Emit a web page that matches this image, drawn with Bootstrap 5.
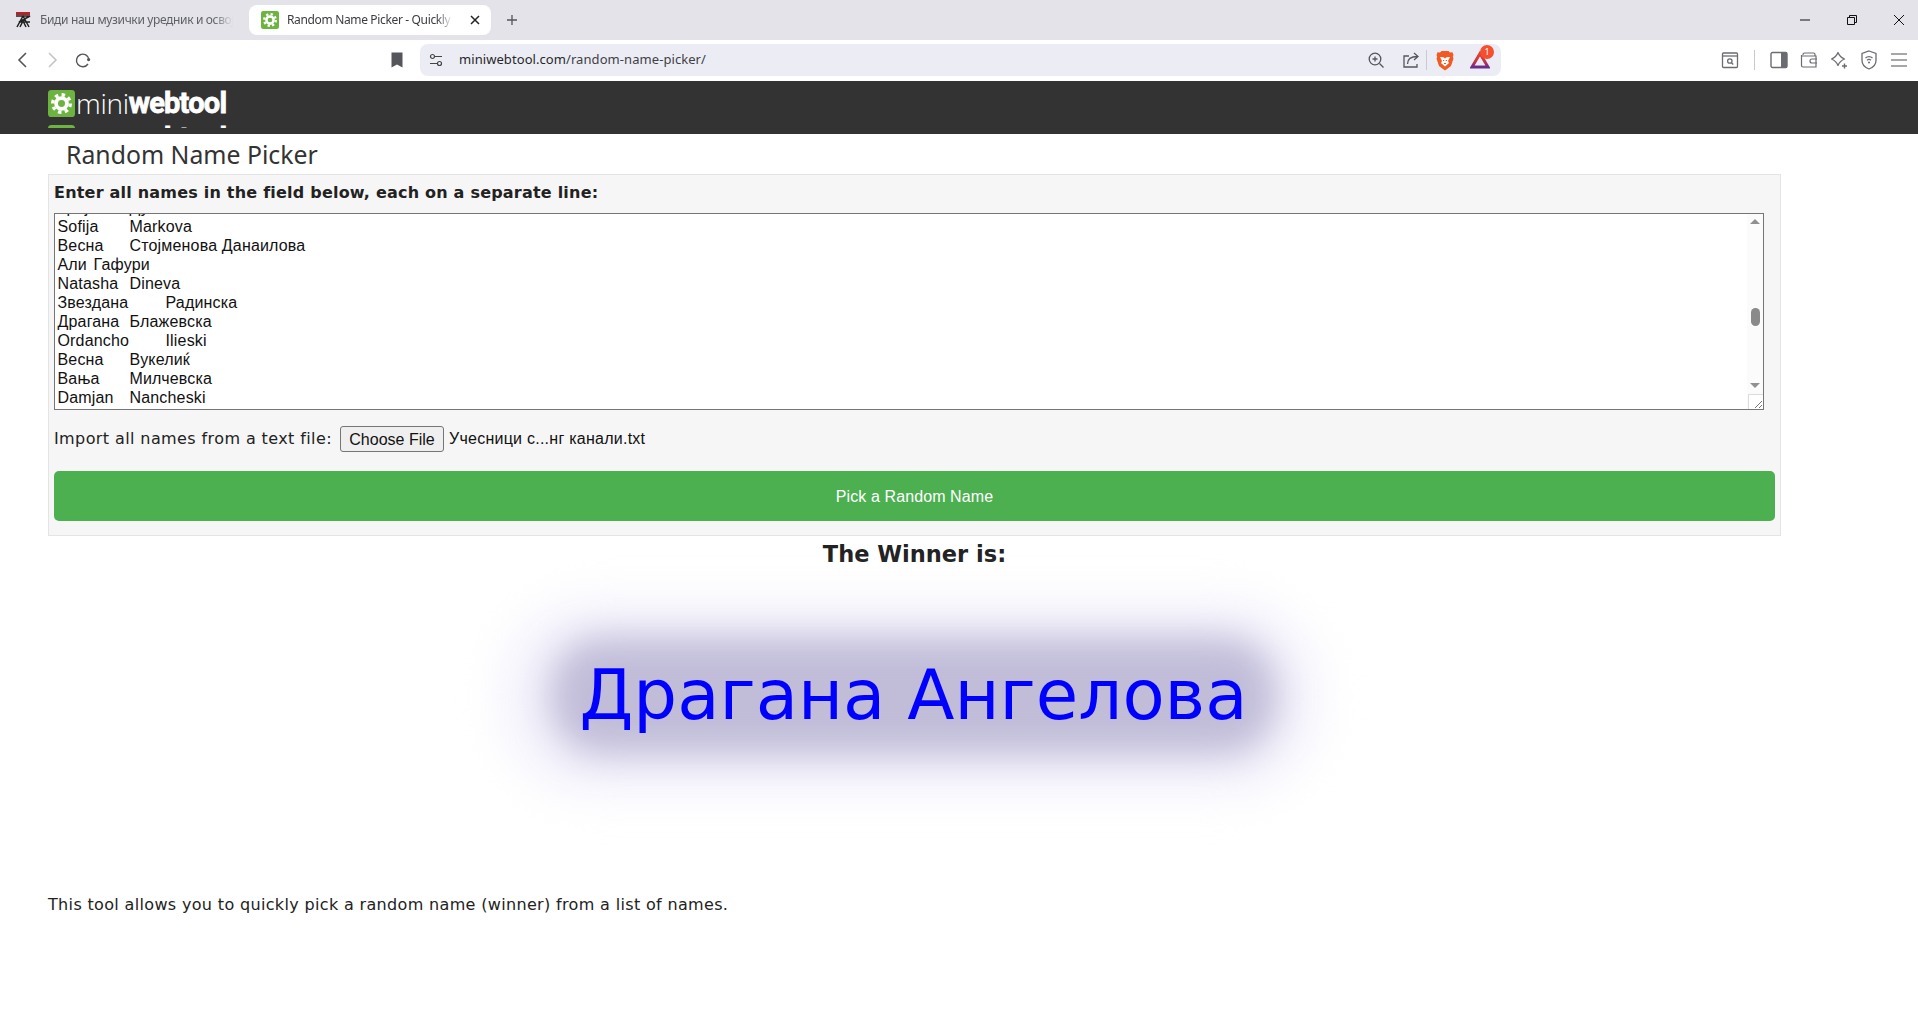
<!DOCTYPE html>
<html lang="en">
<head>
<meta charset="utf-8">
<title>Random Name Picker</title>
<link href="https://cdn.jsdelivr.net/npm/bootstrap@5.3.0/dist/css/bootstrap.min.css" rel="stylesheet">
<style>
html,body{height:100%;background:#fff;overflow:hidden}
body{font-family:"DejaVu Sans",sans-serif;font-size:16px;color:#222}
.tabstrip{height:40px;background:#e3e3e9;font-family:"Noto Sans",sans-serif;font-size:12px;letter-spacing:-.35px}
.tab-idle{width:249px;height:30px;padding-left:14px;color:#5f6068}
.tab-on{width:242px;height:30px;background:#fff;border-radius:8px;padding:0 10px 0 12px;color:#3b3b41}
.tab-text{white-space:nowrap;overflow:hidden;-webkit-mask-image:linear-gradient(90deg,#000 90%,transparent);mask-image:linear-gradient(90deg,#000 90%,transparent)}
.tab-idle-text{width:193px}
.plusmark{margin-left:14px}
.wincontrols{width:141px;margin-right:-4px}
.winbtn{width:47px;height:40px}
.toolbar{height:41px;background:#fff;padding-bottom:1px}
.ic{width:30px;height:30px;flex:none}
.ic-fwd{margin-left:-1px}
.ic-rel{margin-left:1px}
.bmark{margin-left:284px}
.pill{width:1081px;height:32px;margin-left:8px;background:#ecedf4;border-radius:8px;font-family:"Noto Sans",sans-serif;font-size:13px;letter-spacing:.07px;color:#3f4046;padding:0 6px 0 1px}
.urlhost{color:#26272b}
.sepa{width:1px;height:20px;background:#c9cad0;flex:none}
.sepa-wide{margin:0 9px}
.ic-share{margin-left:5px}
.ic-brave{margin-left:3px}
.ic-tri{margin-left:5px}
.tri-count{right:1px;top:0;width:14px;height:14px;background:#f4502f;color:#fff;font-size:9px;line-height:14px;text-align:center}
.sitehead{height:53px;background:#333}
.logowrap{height:47px;width:300px;margin-left:48px;padding-top:9px;overflow:hidden}
.logorow{height:35px;color:#fff;white-space:nowrap;line-height:26px}
.logo-mini{font-family:"Open Sans",sans-serif;font-weight:300;font-size:28px;letter-spacing:-.3px;margin-left:1px}
.logo-web{font-family:"Liberation Sans Narrow","Roboto",sans-serif;font-weight:700;font-size:29px;letter-spacing:-.8px;-webkit-text-stroke:.8px #fff}
.pagearea{padding-left:48px}
.pgtitle{font-family:"Noto Sans",sans-serif;font-size:24.800px;font-weight:400;line-height:40px;margin:0 0 0 18px;color:#333}
.panelbox{width:1733px;height:362px;background:#f6f6f6;border:1px solid #e4e4e4;padding:0 5px}
.lead-label{font-weight:700;font-size:16px;letter-spacing:.21px;line-height:20px;margin:8px 0 0 0;color:#222}
.areawrap{width:1710px;height:197px;margin-top:10px}
.namesbox{display:block;width:100%;height:100%;border:1px solid #767676;padding:3px 2px 2px 2.500px;resize:none;overflow:hidden;font-family:"Liberation Sans",sans-serif;font-size:16px;letter-spacing:.17px;tab-size:7.800;line-height:19px;color:#111;background:#fff;white-space:pre;outline:0}
.fakebar{position:absolute;right:1px;top:1px;bottom:1px;width:16px;background:#fbfbfb}
.bar-up,.bar-down{position:absolute;left:3px;width:0;height:0;border-left:5px solid transparent;border-right:5px solid transparent}
.bar-up{top:5px;border-bottom:5px solid #909090}
.bar-down{bottom:21px;border-top:5px solid #909090}
.bar-thumb{position:absolute;left:4px;top:94px;width:9px;height:18px;border-radius:5px;background:#8a8a8a}
.bar-grip{position:absolute;right:0;bottom:0;width:15px;height:15px;background:#fff;border-left:1px solid #dcdcdc;border-top:1px solid #dcdcdc;line-height:0}
.importrow{margin-top:16px;height:26px;line-height:26px;letter-spacing:.4px}
.filebtn{font-family:"Liberation Sans",sans-serif;font-size:16px;letter-spacing:0;height:26px;width:104px;margin-left:8px;padding:0;border:1px solid #767676;border-radius:3px;background:#efefef;color:#111}
.filename{font-family:"Liberation Sans",sans-serif;font-size:16px;letter-spacing:.25px;margin-left:5px;color:#111}
.pickbtn{display:block;width:1721px;height:50px;margin-top:19px;padding:2px 0 0;background:#4caf50;border:0;border-radius:5px;color:#fff;font-family:"Liberation Sans",sans-serif;font-size:16px;letter-spacing:.1px}
.winhead{width:1733px;font-weight:700;font-size:22.500px;line-height:30px;margin-top:3px;color:#222;text-align:center}
.winname{position:relative;z-index:0;width:1731px;height:304px;color:#00f;font-size:69px;line-height:252px;text-align:center}
.winname::before{content:"";position:absolute;z-index:-1;left:501px;top:67px;width:729px;height:120px;border-radius:55px;background:#c1bdd9;filter:blur(17px)}
.winname::after{content:"";position:absolute;z-index:-2;left:452px;top:30px;width:820px;height:196px;border-radius:90px;background:#f4f3fc;filter:blur(20px)}
.bottomnote{margin:20px 0 0;line-height:24px;letter-spacing:.34px;color:#222}
</style>
</head>
<body>
<svg width="0" height="0" class="d-block position-absolute"><defs>
<symbol id="gearfav" viewBox="0 0 24 24"><rect width="24" height="24" rx="3" fill="#6db33f"/><circle cx="12" cy="12" r="7.800" fill="none" stroke="#fff" stroke-width="3" stroke-dasharray="3.100 3"/><circle cx="12" cy="12" r="4.800" fill="none" stroke="#fff" stroke-width="3.400"/></symbol>
</defs></svg>

<div class="tabstrip d-flex align-items-center">
  <div class="tab-idle d-flex align-items-center">
    <svg width="18" height="18" viewBox="0 0 18 18" class="flex-shrink-0 me-2"><rect x="2" y="1" width="14" height="3" fill="#b3242a"/><path d="M2 5h14L5 11h11M3 16l6-11 6 11M6 16l3-6 3 6" fill="none" stroke="#222" stroke-width="1.500"/></svg>
    <span class="tab-text tab-idle-text">Биди наш музички уредник и освој</span>
  </div>
  <div class="tab-on d-flex align-items-center">
    <svg width="18" height="18" class="flex-shrink-0 me-2"><use href="#gearfav"/></svg>
    <span class="tab-text flex-grow-1">Random Name Picker - Quickly Pick a Random</span>
    <svg width="12" height="12" viewBox="0 0 12 12" class="flex-shrink-0 ms-3"><path d="M2 2l8 8M10 2l-8 8" stroke="#222" stroke-width="1.500"/></svg>
  </div>
  <svg width="14" height="14" viewBox="0 0 14 14" class="plusmark flex-shrink-0"><path d="M7 2v10M2 7h10" stroke="#55565c" stroke-width="1.300"/></svg>
  <div class="wincontrols ms-auto d-flex">
    <div class="winbtn d-flex align-items-center justify-content-center"><svg width="12" height="12" viewBox="0 0 12 12"><path d="M1 6h10" stroke="#111" stroke-width="1"/></svg></div>
    <div class="winbtn d-flex align-items-center justify-content-center"><svg width="12" height="12" viewBox="0 0 12 12"><path d="M1.500 3.500h7v7h-7zM3.500 3.500v-2h7v7h-2" fill="none" stroke="#111" stroke-width="1"/></svg></div>
    <div class="winbtn d-flex align-items-center justify-content-center"><svg width="12" height="12" viewBox="0 0 12 12"><path d="M1 1l10 10M11 1L1 11" stroke="#111" stroke-width="1"/></svg></div>
  </div>
</div>

<div class="toolbar d-flex align-items-center">
  <div class="ic ms-2 d-flex align-items-center justify-content-center"><svg width="16" height="18" viewBox="0 0 16 18"><path d="M11 2L4 9l7 7" fill="none" stroke="#55565c" stroke-width="1.600"/></svg></div>
  <div class="ic ic-fwd d-flex align-items-center justify-content-center"><svg width="16" height="18" viewBox="0 0 16 18"><path d="M5 2l7 7-7 7" fill="none" stroke="#c4c5ca" stroke-width="1.600"/></svg></div>
  <div class="ic ic-rel d-flex align-items-center justify-content-center"><svg width="18" height="18" viewBox="0 0 18 18"><path d="M15 8.500A6.300 6.300 0 1 0 14 13" fill="none" stroke="#55565c" stroke-width="1.400"/><circle cx="14.600" cy="8.600" r="1.600" fill="#55565c"/></svg></div>
  <div class="ic bmark d-flex align-items-center justify-content-center"><svg width="14" height="18" viewBox="0 0 14 18"><path d="M1.500 1.500h11v15L7 13.500l-5.500 3z" fill="#55565c"/></svg></div>
  <div class="pill d-flex align-items-center">
    <div class="ic d-flex align-items-center justify-content-center"><svg width="16" height="16" viewBox="0 0 16 16"><circle cx="4.500" cy="4.500" r="2" fill="none" stroke="#444" stroke-width="1.200"/><path d="M7 4.500h7M2 11.500h7" stroke="#444" stroke-width="1.200"/><circle cx="11.500" cy="11.500" r="2" fill="none" stroke="#444" stroke-width="1.200"/></svg></div>
    <span class="ms-2"><span class="urlhost">miniwebtool.com</span>/random-name-picker/</span>
    <div class="ic ms-auto d-flex align-items-center justify-content-center"><svg width="18" height="18" viewBox="0 0 18 18"><circle cx="8" cy="8" r="5.800" fill="none" stroke="#55565c" stroke-width="1.300"/><path d="M12.500 12.500l4 4M8 5.500v5M5.500 8h5" stroke="#55565c" stroke-width="1.300"/></svg></div>
    <div class="ic ic-share d-flex align-items-center justify-content-center"><svg width="18" height="18" viewBox="0 0 18 18"><path d="M7 5H2v11h13v-3" fill="none" stroke="#55565c" stroke-width="1.300"/><path d="M5.500 13c0-5 3-7.500 10-7.500M12 2l4 3.500L12 9" fill="none" stroke="#55565c" stroke-width="1.300"/></svg></div>
    <div class="sepa"></div>
    <div class="ic ic-brave d-flex align-items-center justify-content-center"><svg width="18" height="21" viewBox="0 0 18 21"><path d="M5.500 1h7L14 2.500l2.500-.3L17.500 5l-.7 2 .7 1.500-2.500 7.500L9 20.500 3 16 .5 8.500 1.200 7 .5 5l1-2.800 2.500.3z" fill="#f15a22"/><path d="M4 7l3.500.2L9 8.500l1.500-1.300L14 7l-2 4 1 2-4 3.500L5 13l1-2z" fill="#fff"/><path d="M7 10.500h1.200M9.800 10.500H11M8 13.500h2" stroke="#f15a22" stroke-width="1"/></svg></div>
    <div class="ic ic-tri position-relative d-flex align-items-center justify-content-center"><svg width="20" height="18" viewBox="0 0 20 18"><defs><linearGradient id="trigrad" x1="0" y1="0" x2="0" y2="1"><stop offset="0" stop-color="#e8402a"/><stop offset=".65" stop-color="#c0334e"/><stop offset="1" stop-color="#662d91"/></linearGradient></defs><path d="M10 2.500l8 13.500H2z" fill="none" stroke="url(#trigrad)" stroke-width="3"/></svg><span class="tri-count position-absolute rounded-circle d-block">1</span></div>
  </div>
  <div class="ms-auto d-flex align-items-center me-1">
    <div class="ic d-flex align-items-center justify-content-center"><svg width="18" height="18" viewBox="0 0 18 18"><rect x="1.500" y="2" width="15" height="14.500" rx="1" fill="none" stroke="#6b6c72" stroke-width="1.300"/><path d="M1.500 5h15" stroke="#6b6c72" stroke-width="1.300"/><circle cx="8.800" cy="10" r="2.200" fill="none" stroke="#6b6c72" stroke-width="1.300"/><path d="M10.500 11.800l1.700 1.700" stroke="#6b6c72" stroke-width="1.300"/></svg></div>
    <div class="sepa sepa-wide"></div>
    <div class="ic d-flex align-items-center justify-content-center"><svg width="18" height="18" viewBox="0 0 18 18"><rect x="1" y="1.500" width="16" height="15" rx="1.500" fill="none" stroke="#6b6c72" stroke-width="1.400"/><rect x="11" y="1.500" width="6" height="15" fill="#6b6c72"/></svg></div>
    <div class="ic d-flex align-items-center justify-content-center"><svg width="18" height="18" viewBox="0 0 18 18"><path d="M3 4V3.500A1.500 1.500 0 0 1 4.500 2h9A1.500 1.500 0 0 1 15 3.500V5M1.500 5H16v11H3a1.500 1.500 0 0 1-1.500-1.500V4" fill="none" stroke="#6b6c72" stroke-width="1.200"/><path d="M17 8h-5a2 2 0 0 0 0 4h5" fill="none" stroke="#6b6c72" stroke-width="1.200"/></svg></div>
    <div class="ic d-flex align-items-center justify-content-center"><svg width="18" height="18" viewBox="0 0 18 18"><path d="M8 1.500c1 2.500 2.800 5 6.500 6.500-3.700 1.500-5.500 4-6.500 6.500C7 12 5.200 9.500 1.500 8 5.200 6.500 7 4 8 1.500z" fill="none" stroke="#6b6c72" stroke-width="1.300" stroke-linejoin="round"/><path d="M14.500 12.500v5M12 15h5" stroke="#6b6c72" stroke-width="1.400"/></svg></div>
    <div class="ic d-flex align-items-center justify-content-center"><svg width="18" height="20" viewBox="0 0 18 20"><path d="M9 1l7 2.500v7c0 4-3 7-7 8.500-4-1.500-7-4.500-7-8.500v-7z" fill="none" stroke="#6b6c72" stroke-width="1.300"/><path d="M5.500 8a5 5 0 0 1 7 0M7 10.200a3 3 0 0 1 4 0" fill="none" stroke="#6b6c72" stroke-width="1.200"/><circle cx="9" cy="12.500" r="1" fill="#6b6c72"/></svg></div>
    <div class="ic d-flex align-items-center justify-content-center"><svg width="18" height="16" viewBox="0 0 18 16"><path d="M1 2h16M1 8h16M1 14h16" stroke="#8a8b90" stroke-width="1.600"/></svg></div>
  </div>
</div>

<div class="sitehead">
  <div class="logowrap">
    <div class="logorow d-flex align-items-start"><svg width="27" height="27" class="flex-shrink-0"><use href="#gearfav"/></svg><span class="logo-mini">mini</span><span class="logo-web">webtool</span></div>
    <div class="logorow d-flex align-items-start"><svg width="27" height="27" class="flex-shrink-0"><use href="#gearfav"/></svg><span class="logo-mini">mini</span><span class="logo-web">webtool</span></div>
  </div>
</div>

<main class="pagearea">
  <h1 class="pgtitle">Random Name Picker</h1>
  <form class="panelbox" onsubmit="return false">
    <p class="lead-label">Enter all names in the field below, each on a separate line:</p>
    <div class="areawrap position-relative">
      <textarea id="names" class="namesbox" spellcheck="false">Марија	Петровска
Трајче	Дуковска
Sofija	Markova
Весна	Стојменова Данаилова
Али	Гафури
Natasha	Dineva
Звездана 	Радинска
Драгана	Блажевска
Ordancho	Ilieski
Весна	Вукелиќ
Вања	Милчевска
Damjan	Nancheski
Драгана	Ангелова
Илија	Стојановски
Marko	Petrov
Елена	Трајковска</textarea>
      <div class="fakebar"><span class="bar-up"></span><span class="bar-thumb"></span><span class="bar-down"></span><span class="bar-grip"><svg width="14" height="14" viewBox="0 0 14 14"><path d="M13 6l-7 7M13 10l-3 3" stroke="#777" stroke-width="1"/></svg></span></div>
    </div>
    <div class="importrow d-flex align-items-center">Import all names from a text file:<button type="button" class="filebtn">Choose File</button><span class="filename">Учесници с...нг канали.txt</span></div>
    <button type="button" class="pickbtn">Pick a Random Name</button>
  </form>
  <div class="winhead">The Winner is:</div>
  <div class="winname">Драгана Ангелова</div>
  <p class="bottomnote">This tool allows you to quickly pick a random name (winner) from a list of names.</p>
</main>
<script src="https://cdn.jsdelivr.net/npm/bootstrap@5.3.0/dist/js/bootstrap.bundle.min.js"></script>
<script>document.getElementById('names').scrollTop=38;</script>
</body>
</html>
